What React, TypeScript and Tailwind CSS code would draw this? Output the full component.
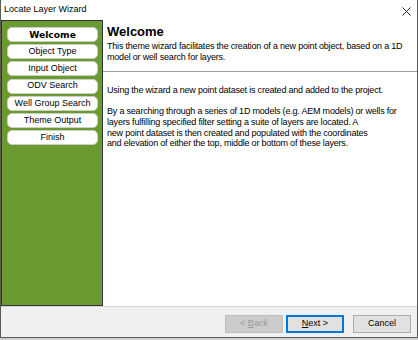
import React from "react";

const steps = [
	"Welcome",
	"Object Type",
	"Input Object",
	"ODV Search",
	"Well Group Search",
	"Theme Output",
	"Finish",
];

const App = () => {
	return (
		<div className="w-[418px] h-[340px] bg-[#cfcfcf] font-['Liberation_Sans',Arial,sans-serif] text-black">
			<div className="h-[338px] flex flex-col border-x border-b border-[#5a5a5a] bg-white">
				{/* title bar */}
				<div className="h-[20px] flex items-center justify-between pl-[3px] pr-[6px] text-[9px]">
					<span>Locate Layer Wizard</span>
					<svg width="9" height="9" viewBox="0 0 9 9" className="mt-[2px]">
						<path d="M0.5 0.5 L8.5 8.5 M8.5 0.5 L0.5 8.5" stroke="#222" strokeWidth="1" />
					</svg>
				</div>

				<div className="flex h-[286px]">
					{/* steps */}
					<div className="w-[102px] border border-[#333] bg-[#6a9a31] pt-[6px] pl-[5px] flex flex-col gap-[2.2px]">
						{steps.map((s, i) => (
							<div
								key={s}
								className={
									i === 0
										? "w-[91px] h-[15px] flex items-center justify-center bg-white border border-[#c9cfc1] rounded-[5px] font-['DejaVu_Sans',sans-serif] font-bold text-[9.2px]"
										: "w-[91px] h-[15px] flex items-center justify-center bg-white border border-[#c9cfc1] rounded-[5px] text-[9px]"
								}
							>
								{s}
							</div>
						))}
					</div>

					{/* main */}
					<div className="flex-1 flex flex-col bg-white">
						<div className="pl-[4px] pt-[4px]">
							<h1 className="text-[13px] leading-[15px] font-bold">Welcome</h1>
							<div className="mt-[2px] text-[9px] leading-[10.6px] tracking-[-0.2px] whitespace-nowrap">
								<div>This theme wizard facilitates the creation of a new point object, based on a 1D</div>
								<div>model or well search for layers.</div>
							</div>
						</div>
						<div className="mt-[9px] border-t border-[#a0a0a0] border-b border-b-white" />
						<div className="pl-[4px] pt-[12px] text-[9px] leading-[10.6px] tracking-[-0.2px] whitespace-nowrap">
							<div>Using the wizard a new point dataset is created and added to the project.</div>
							<div className="mt-[10.6px]">By a searching through a series of 1D models (e.g. AEM models) or wells for</div>
							<div>layers fulfilling specified filter setting a suite of layers are located. A</div>
							<div>new point dataset is then created and populated with the coordinates</div>
							<div>and elevation of either the top, middle or bottom of these layers.</div>
						</div>
					</div>
				</div>

				{/* buttons */}
				<div className="flex-1 bg-[#f0f0f0] border-t border-[#d7d7d7] flex items-start justify-end pt-[8px] pr-[6px] text-[9px]">
					<button className="w-[58px] h-[18px] bg-[#cccccc] border border-[#bfbfbf] text-[#9a9a9a]">
						&lt; <span className="underline">B</span>ack
					</button>
					<button className="ml-[3px] w-[58px] h-[18px] bg-[#e1e1e1] border-2 border-[#0078d7]">
						<span className="underline">N</span>ext &gt;
					</button>
					<button className="ml-[9px] w-[58px] h-[18px] bg-[#e1e1e1] border border-[#adadad]">
						Cancel
					</button>
				</div>
			</div>
		</div>
	);
};

export default App;
